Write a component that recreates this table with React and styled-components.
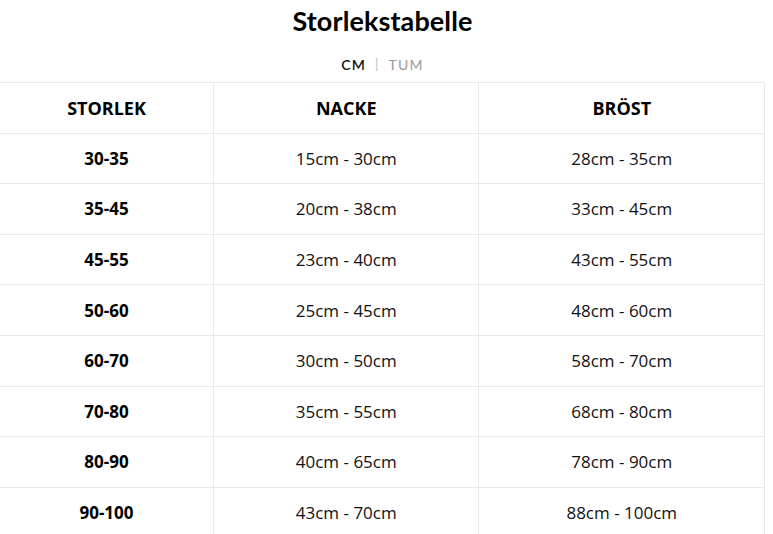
import styled, { createGlobalStyle } from "styled-components";

const GlobalStyle = createGlobalStyle`
  body {
    margin: 0;
    background: #fff;
    font-family: "Open Sans", "Liberation Sans", sans-serif;
    color: #111;
  }
`;

const rows = [
  ["30-35", "15cm - 30cm", "28cm - 35cm"],
  ["35-45", "20cm - 38cm", "33cm - 45cm"],
  ["45-55", "23cm - 40cm", "43cm - 55cm"],
  ["50-60", "25cm - 45cm", "48cm - 60cm"],
  ["60-70", "30cm - 50cm", "58cm - 70cm"],
  ["70-80", "35cm - 55cm", "68cm - 80cm"],
  ["80-90", "40cm - 65cm", "78cm - 90cm"],
  ["90-100", "43cm - 70cm", "88cm - 100cm"],
];

function App() {
  return (
    <>
      <GlobalStyle />
      <Wrapper>
        <Title>Storlekstabelle</Title>
        <Units>
          <Unit $active>CM</Unit>
          <Sep>|</Sep>
          <Unit>TUM</Unit>
        </Units>
        <Table>
          <colgroup>
            <col style={{ width: 214 }} />
            <col style={{ width: 265 }} />
            <col style={{ width: 286 }} />
          </colgroup>
          <thead>
            <tr>
              <Th>STORLEK</Th>
              <Th>NACKE</Th>
              <Th>BRÖST</Th>
            </tr>
          </thead>
          <tbody>
            {rows.map((r) => (
              <tr key={r[0]}>
                <Td $bold>{r[0]}</Td>
                <Td>{r[1]}</Td>
                <Td>{r[2]}</Td>
              </tr>
            ))}
          </tbody>
        </Table>
      </Wrapper>
    </>
  );
}

const Wrapper = styled.div`
  width: 765px;
  display: flex;
  flex-direction: column;
  align-items: center;
`;

const Title = styled.h1`
  margin: 6px 0 0;
  font-family: "Lato", "Liberation Sans", sans-serif;
  font-weight: 700;
  font-size: 27px;
  line-height: 30px;
  letter-spacing: 0.1px;
  color: #000;
`;

const Units = styled.div`
  display: flex;
  align-items: center;
  gap: 9px;
  margin-top: 19px;
  height: 18px;
  font-family: "Lato", "Open Sans", sans-serif;
  font-size: 14px;
  letter-spacing: 1.2px;
`;

const Unit = styled.span`
  color: ${({ $active }) => ($active ? "#111" : "#999")};
  font-weight: ${({ $active }) => ($active ? 600 : 400)};
`;

const Sep = styled.span`
  color: #bbb;
  font-size: 13px;
`;

const Table = styled.table`
  margin-top: 9px;
  width: 765px;
  border-collapse: collapse;
  table-layout: fixed;
  border-top: 1px solid #e8e8e8;
`;

const Th = styled.th`
  height: 49.6px;
  padding: 0;
  font-size: 18px;
  font-weight: 700;
  color: #000;
  text-align: center;
  border-right: 1px solid #e8e8e8;
  border-bottom: 1px solid #e8e8e8;
`;

const Td = styled.td`
  height: 49.6px;
  padding: 0;
  font-size: 17px;
  font-weight: ${({ $bold }) => ($bold ? 700 : 400)};
  color: ${({ $bold }) => ($bold ? "#000" : "#111")};
  text-align: center;
  border-right: 1px solid #e8e8e8;
  border-bottom: 1px solid #e8e8e8;
`;

export default App;
